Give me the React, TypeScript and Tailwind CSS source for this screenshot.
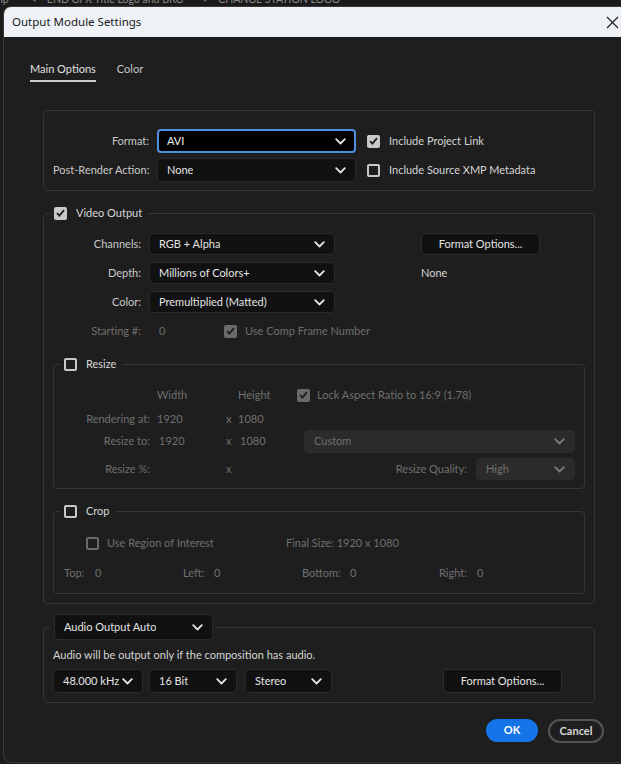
import type { ReactElement, ReactNode } from 'react'

const FONT = { fontFamily: 'Lato, "Open Sans", sans-serif' }

function Chevron({ muted = false }: { muted?: boolean }): ReactElement {
  return (
    <svg width="11" height="7" viewBox="0 0 11 7" className="shrink-0">
      <polyline
        points="1.2,1.2 5.5,5.5 9.8,1.2"
        fill="none"
        stroke={muted ? '#7a7a7a' : '#e4e4e4'}
        strokeWidth="1.8"
        strokeLinecap="round"
        strokeLinejoin="round"
      />
    </svg>
  )
}

function Checkbox({ checked = false, disabled = false }: { checked?: boolean; disabled?: boolean }): ReactElement {
  if (checked) {
    return (
      <span
        className={`flex h-[13px] w-[13px] shrink-0 items-center justify-center rounded-[2px] ${
          disabled ? 'bg-[#6a6a6a]' : 'bg-[#c8c8c8]'
        }`}
      >
        <svg width="9" height="8" viewBox="0 0 9 8">
          <polyline points="1,4.2 3.4,6.6 8,1.2" fill="none" stroke="#1e1e1e" strokeWidth="1.8" />
        </svg>
      </span>
    )
  }
  return (
    <span
      className={`block h-[13px] w-[13px] shrink-0 rounded-[2px] border-2 ${
        disabled ? 'border-[#6a6a6a]' : 'border-[#c8c8c8]'
      }`}
    />
  )
}

type SelectProps = {
  value: string
  className: string
  variant?: 'normal' | 'focus' | 'disabled'
}

function Select({ value, className, variant = 'normal' }: SelectProps): ReactElement {
  const look =
    variant === 'focus'
      ? 'border-2 border-[#4f8fdf] bg-black pl-[8px] pr-[8px] text-[#f0f0f0]'
      : variant === 'disabled'
        ? 'border border-[#2b2b2b] bg-[#2b2b2b] pl-[9px] pr-[9px] text-[#707070]'
        : 'border border-[#2a2a2a] bg-[#111111] pl-[9px] pr-[9px] text-[#e4e4e4]'
  return (
    <div className={`flex shrink-0 items-center justify-between rounded-[4px] ${look} ${className}`}>
      <span className="truncate">{value}</span>
      <Chevron muted={variant === 'disabled'} />
    </div>
  )
}

function Button({ label, className }: { label: string; className: string }): ReactElement {
  return (
    <div
      className={`flex shrink-0 items-center justify-center rounded-[4px] border border-[#2c2c2c] bg-[#111111] text-[#e4e4e4] ${className}`}
    >
      {label}
    </div>
  )
}

function Group({
  legend,
  className,
  children
}: {
  legend: ReactNode
  className: string
  children: ReactNode
}): ReactElement {
  return (
    <fieldset className={`rounded-[4px] border border-[#353535] pl-[6px] ${className}`}>
      <legend className="px-[4px]">{legend}</legend>
      {children}
    </fieldset>
  )
}

function CheckLegend({ label, checked = false }: { label: string; checked?: boolean }): ReactElement {
  return (
    <span className="flex h-[16px] items-center gap-[9px] pr-[2px] text-[#d8d8d8]">
      <Checkbox checked={checked} />
      {label}
    </span>
  )
}

export default function App(): ReactElement {
  return (
    <div className="relative h-[764px] w-[621px] overflow-hidden bg-[#1b1b1b] text-[11px]" style={FONT}>
      <div className="h-[6px] overflow-hidden">
        <div className="-mt-[8px] flex whitespace-nowrap text-[10.5px] text-[#8a8a8a]">
          <span className="-ml-[3px]">np</span>
          <span className="ml-[22px]">&lt;</span>
          <span className="ml-[10px]">END GFX Title Logo and BKG</span>
          <span className="ml-[18px]">&lt;</span>
          <span className="ml-[11px]">CHANGE STATION LOGO</span>
        </div>
      </div>

      <div className="ml-[3px] flex h-[757px] w-[640px] flex-col overflow-hidden rounded-[8px] border border-[#3a3a3a] bg-[#1e1e1e]">
        {/* title bar */}
        <div
          className="flex h-[30px] shrink-0 items-center justify-between bg-[#eef2f7] pl-[8px] pr-[23px] text-[11.5px] text-[#1a1a1a]"
          style={{ fontFamily: '"Noto Sans", sans-serif' }}
        >
          <span>Output Module Settings</span>
          <svg width="13" height="13" viewBox="0 0 13 13">
            <path d="M1 1 L12 12 M12 1 L1 12" stroke="#222" strokeWidth="1.2" />
          </svg>
        </div>

        {/* tabs */}
        <div className="ml-[26px] mt-[24px] flex gap-[21px] text-[11px]">
          <span className="border-b-2 border-[#cfcfcf] pb-[3px] leading-[16px] text-[#e0e0e0]">Main Options</span>
          <span className="pb-[3px] leading-[16px] text-[#c8c8c8]">Color</span>
        </div>

        <div className="ml-[39px] flex w-[552px] flex-col">
          {/* format panel */}
          <div className="mt-[28px] flex flex-col gap-[5px] rounded-[4px] border border-[#353535] pb-[8px] pl-[9px] pt-[18px]">
            <div className="flex items-center">
              <span className="w-[96px] whitespace-nowrap text-right text-[#c9c9c9]">Format:</span>
              <Select value="AVI" variant="focus" className="ml-[8px] h-[24px] w-[199px]" />
              <span className="ml-[11px] flex items-center gap-[9px] text-[#d4d4d4]">
                <Checkbox checked />
                Include Project Link
              </span>
            </div>
            <div className="flex items-center">
              <span className="w-[96px] whitespace-nowrap text-right text-[#c9c9c9]">Post-Render Action:</span>
              <Select value="None" className="ml-[8px] h-[24px] w-[199px]" />
              <span className="ml-[11px] flex items-center gap-[9px] text-[#d4d4d4]">
                <Checkbox />
                Include Source XMP Metadata
              </span>
            </div>
          </div>

          {/* video output */}
          <Group legend={<CheckLegend label="Video Output" checked />} className="mt-[14px] pb-[9px] pr-[9px]">
            <div className="flex flex-col pt-[12px]">
              <div className="flex items-center">
                <span className="w-[91px] text-right text-[#c9c9c9]">Channels:</span>
                <Select value="RGB + Alpha" className="ml-[8px] h-[22px] w-[186px]" />
                <Button label="Format Options..." className="ml-[86px] h-[22px] w-[119px]" />
              </div>
              <div className="mt-[7px] flex items-center">
                <span className="w-[91px] text-right text-[#c9c9c9]">Depth:</span>
                <Select value="Millions of Colors+" className="ml-[8px] h-[22px] w-[186px]" />
                <span className="ml-[86px] text-[#d4d4d4]">None</span>
              </div>
              <div className="mt-[7px] flex items-center">
                <span className="w-[91px] text-right text-[#c9c9c9]">Color:</span>
                <Select value="Premultiplied (Matted)" className="ml-[8px] h-[22px] w-[186px]" />
              </div>
              <div className="mt-[7px] flex h-[22px] items-center text-[#6f6f6f]">
                <span className="w-[91px] text-right">Starting #:</span>
                <span className="ml-[18px] w-[65px]">0</span>
                <Checkbox checked disabled />
                <span className="ml-[8px]">Use Comp Frame Number</span>
              </div>
            </div>

            {/* resize */}
            <Group legend={<CheckLegend label="Resize" />} className="ml-[3px] mt-[14px] pb-[8px] pr-[9px]">
              <div className="flex flex-col pt-[15px] text-[#707070]">
                <div className="flex h-[16px] items-center">
                  <span className="w-[90px]" />
                  <span className="ml-[7px] w-[81px]">Width</span>
                  <span className="w-[59px]">Height</span>
                  <Checkbox checked disabled />
                  <span className="ml-[7px]">Lock Aspect Ratio to 16:9 (1.78)</span>
                </div>
                <div className="mt-[6px] flex h-[20px] items-center">
                  <span className="w-[90px] text-right">Rendering at:</span>
                  <span className="ml-[7px] w-[69px]">1920</span>
                  <span className="w-[12px]">x</span>
                  <span>1080</span>
                </div>
                <div className="mt-[1px] flex h-[23px] items-center">
                  <span className="w-[90px] text-right">Resize to:</span>
                  <span className="ml-[9px] w-[67px]">1920</span>
                  <span className="w-[14px]">x</span>
                  <span className="w-[64px]">1080</span>
                  <Select value="Custom" variant="disabled" className="h-[23px] w-[271px]" />
                </div>
                <div className="mt-[5px] flex h-[22px] items-center">
                  <span className="w-[90px] text-right">Resize %:</span>
                  <span className="ml-[7px] w-[69px]" />
                  <span className="w-[12px]">x</span>
                  <span className="ml-auto mr-[9px]">Resize Quality:</span>
                  <Select value="High" variant="disabled" className="h-[22px] w-[99px]" />
                </div>
              </div>
            </Group>

            {/* crop */}
            <Group legend={<CheckLegend label="Crop" />} className="ml-[3px] mt-[14px] pb-[12px] pr-[9px]">
              <div className="flex flex-col pt-[16px] text-[#707070]">
                <div className="flex h-[16px] items-center">
                  <span className="ml-[26px] flex">
                    <Checkbox disabled />
                  </span>
                  <span className="ml-[8px] w-[179px]">Use Region of Interest</span>
                  <span>Final Size: 1920 x 1080</span>
                </div>
                <div className="ml-[4px] mt-[14px] flex h-[16px] items-center">
                  <span className="w-[31px]">Top:</span>
                  <span className="w-[88px]">0</span>
                  <span className="w-[31px]">Left:</span>
                  <span className="w-[88px]">0</span>
                  <span className="w-[48px]">Bottom:</span>
                  <span className="w-[89px]">0</span>
                  <span className="w-[38px]">Right:</span>
                  <span>0</span>
                </div>
              </div>
            </Group>
          </Group>

          {/* audio */}
          <Group
            legend={<Select value="Audio Output Auto" className="h-[26px] w-[159px]" />}
            className="mt-[10px] pb-[9px] pr-[9px]"
          >
            <div className="flex flex-col pt-[7px]">
              <span className="ml-[3px] h-[16px] leading-[16px] text-[#d4d4d4]">
                Audio will be output only if the composition has audio.
              </span>
              <div className="ml-[3px] mt-[6px] flex items-center">
                <Select value="48.000 kHz" className="h-[24px] w-[90px]" />
                <Select value="16 Bit" className="ml-[6px] h-[24px] w-[88px]" />
                <Select value="Stereo" className="ml-[8px] h-[24px] w-[87px]" />
                <Button label="Format Options..." className="ml-[111px] h-[24px] w-[119px]" />
              </div>
            </div>
          </Group>

          <div className="mt-[16px] flex w-[561px] justify-end gap-[10px] font-bold">
            <div className="flex h-[23px] w-[52px] items-center justify-center rounded-full bg-[#1473e6] text-white">
              OK
            </div>
            <div className="flex h-[24px] w-[56px] items-center justify-center rounded-full border-2 border-[#555555] text-[#d6d6d6]">
              Cancel
            </div>
          </div>
        </div>
      </div>
    </div>
  )
}
